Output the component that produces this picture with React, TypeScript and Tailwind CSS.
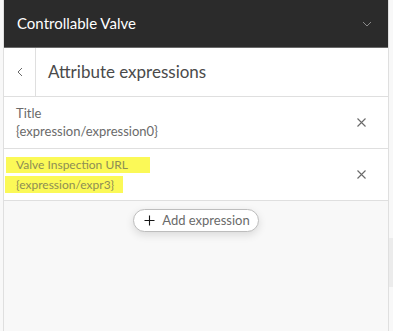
import React from 'react';

function XIcon() {
  return (
    <svg width="9" height="9" viewBox="0 0 9 9" className="text-[#6a6a6a]">
      <path d="M0.5 0.5L8.5 8.5M8.5 0.5L0.5 8.5" stroke="currentColor" strokeWidth="1.1" fill="none" />
    </svg>
  );
}

interface RowProps {
  label: string;
  value: string;
  highlight?: boolean;
}

function ExpressionRow({ label, value, highlight }: RowProps) {
  return (
    <div className="flex h-[52px] items-center border-b border-[#dfdfdf] bg-white">
      <div className="flex flex-1 flex-col pl-3">
        {highlight ? (
          <>
            <span className="-ml-[10px] w-fit bg-[#fbf957] py-[1px] pl-[10px] pr-[22px] text-[12px] leading-[14px] text-[#8d8d55]">{label}</span>
            <span className="-ml-[11px] mt-[3px] w-fit bg-[#fbf957] py-[1px] pl-[11px] pr-[9px] text-[12px] leading-[15px] text-[#8d8d55]">{value}</span>
          </>
        ) : (
          <>
            <span className="-mt-[2px] text-[13px] leading-[18px] text-[#6a6a6a]">{label}</span>
            <span className="text-[13px] leading-[18px] text-[#6a6a6a]">{value}</span>
          </>
        )}
      </div>
      <button className="mr-[15px] flex h-6 w-6 items-center justify-center">
        <XIcon />
      </button>
    </div>
  );
}

export default function App() {
  return (
    <div className="flex h-[331px] w-[393px] bg-[#f8f8f8] font-['Lato',sans-serif]">
      <div className="ml-[3px] flex w-[386px] flex-col border-x border-[#dfdfdf] bg-[#f8f8f8]">
        <div className="flex h-[48px] items-center justify-between border-b border-[#6a6a6a] bg-[#2b2b2b] pl-[13px] pr-[16px]">
          <span className="text-[15px] text-white">Controllable Valve</span>
          <svg width="10" height="6" viewBox="0 0 10 6">
            <path d="M1 1L5 5L9 1" stroke="#8a8a8a" strokeWidth="1" fill="none" />
          </svg>
        </div>
        <div className="flex h-[49px] items-stretch border-b border-[#dfdfdf] bg-white">
          <div className="flex w-[32px] items-center justify-center border-r border-[#dfdfdf]">
            <svg width="6" height="10" viewBox="0 0 6 10">
              <path d="M5 1L1 5L5 9" stroke="#6a6a6a" strokeWidth="1" fill="none" />
            </svg>
          </div>
          <div className="flex items-center pl-3 text-[17px] text-[#4a4a4a]">Attribute expressions</div>
        </div>
        <ExpressionRow label="Title" value="{expression/expression0}" />
        <ExpressionRow label="Valve Inspection URL" value="{expression/expr3}" highlight />
        <div className="flex justify-center pt-2">
          <button className="flex h-[23px] items-center gap-[7px] rounded-full border border-[#bdbdbd] bg-white pl-[10px] pr-2 text-[13px] text-[#6a6a6a] shadow-[0_3px_8px_rgba(0,0,0,0.12)]">
            <svg width="11" height="11" viewBox="0 0 11 11">
              <path d="M5.5 0.5V10.5M0.5 5.5H10.5" stroke="#151515" strokeWidth="1.1" fill="none" />
            </svg>
            Add expression
          </button>
        </div>
      </div>
      <div className="mt-[238px] h-[49px] w-[4px] bg-[#ececec]" />
    </div>
  );
}
